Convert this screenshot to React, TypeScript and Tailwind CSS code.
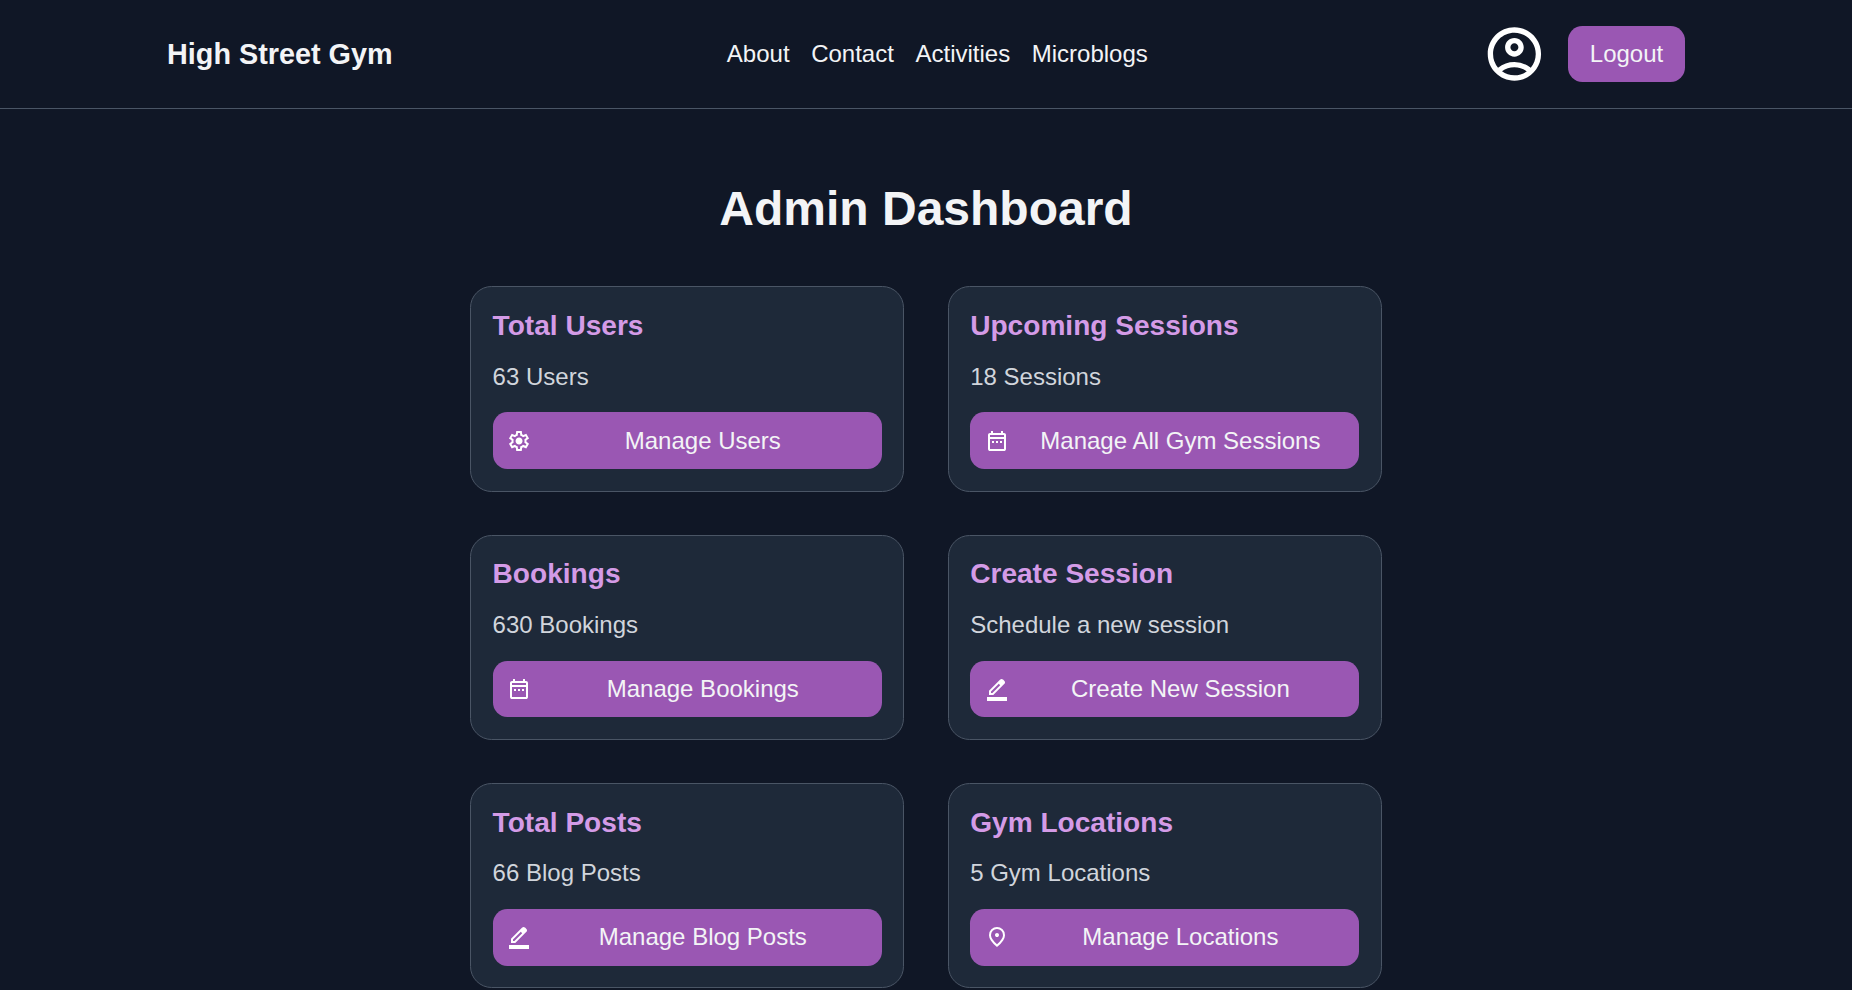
import React from "react";
import { MdOutlineAccountCircle } from "react-icons/md";

const icons = {
  settings:
    "m9.25 22l-.4-3.2q-.325-.125-.612-.3t-.563-.375L4.7 19.375l-2.75-4.75l2.575-1.95Q4.5 12.5 4.5 12.338v-.675q0-.163.025-.338L1.95 9.375l2.75-4.75l2.975 1.25q.275-.2.575-.375t.6-.3l.4-3.2h5.5l.4 3.2q.325.125.613.3t.562.375l2.975-1.25l2.75 4.75l-2.575 1.95q.025.175.025.338v.674q0 .163-.05.338l2.575 1.95l-2.75 4.75l-2.95-1.25q-.275.2-.575.375t-.6.3l-.4 3.2zM11 20h1.975l.35-2.65q.775-.2 1.438-.587t1.212-.938l2.475 1.025l.975-1.7l-2.15-1.625q.125-.35.175-.737T17.5 12t-.05-.787t-.175-.738l2.15-1.625l-.975-1.7l-2.475 1.05q-.55-.575-1.212-.962t-1.438-.588L13 4h-1.975l-.35 2.65q-.775.2-1.437.588t-1.213.937L5.55 7.15l-.975 1.7l2.15 1.6q-.125.375-.175.75t-.05.8q0 .4.05.775t.175.75l-2.15 1.625l.975 1.7l2.475-1.05q.55.575 1.213.963t1.437.587zm1.05-4.5q1.45 0 2.475-1.025T15.55 12t-1.025-2.475T12.05 8.5q-1.475 0-2.488 1.025T8.55 12t1.013 2.475T12.05 15.5",
  calendar:
    "M5 22q-.825 0-1.412-.587T3 20V6q0-.825.588-1.412T5 4h1V2h2v2h8V2h2v2h1q.825 0 1.413.588T21 6v14q0 .825-.587 1.413T19 22zm0-2h14V10H5zM5 8h14V6H5zM7 12h2v2H7zm4 0h2v2h-2zm4 0h2v2h-2z",
  pencil:
    "M2 24v-4h20v4zM4 18v-4.25L15.2 2.575q.275-.275.638-.425t.762-.15t.775.15t.675.45L19.425 4q.3.275.438.65T20 5.4q0 .4-.137.763t-.438.662L8.25 18zm2-2h1.4l7.8-7.8-1.4-1.4L6 14.6z",
  pin: "M12 12q.825 0 1.413-.587T14 10t-.587-1.412T12 8t-1.412.588T10 10t.588 1.413T12 12m0 7.35q3.05-2.8 4.525-5.087T18 10.2q0-2.725-1.737-4.462T12 4T7.738 5.738T6 10.2q0 1.775 1.475 4.063T12 19.35M12 22q-4.025-3.425-6.012-6.362T4 10.2q0-3.75 2.413-5.975T12 2t5.588 2.225T20 10.2q0 2.5-1.987 5.438T12 22",
};

type IconName = keyof typeof icons;

interface CardProps {
  title: string;
  detail: string;
  action: string;
  icon: IconName;
}

const cards: CardProps[] = [
  { title: "Total Users", detail: "63 Users", action: "Manage Users", icon: "settings" },
  { title: "Upcoming Sessions", detail: "18 Sessions", action: "Manage All Gym Sessions", icon: "calendar" },
  { title: "Bookings", detail: "630 Bookings", action: "Manage Bookings", icon: "calendar" },
  { title: "Create Session", detail: "Schedule a new session", action: "Create New Session", icon: "pencil" },
  { title: "Total Posts", detail: "66 Blog Posts", action: "Manage Blog Posts", icon: "pencil" },
  { title: "Gym Locations", detail: "5 Gym Locations", action: "Manage Locations", icon: "pin" },
];

const links = ["About", "Contact", "Activities", "Microblogs"];

function Icon({ name }: { name: IconName }) {
  return (
    <svg viewBox="0 0 24 24" fill="white" className="size-6 shrink-0">
      <path d={icons[name]} />
    </svg>
  );
}

function Card({ title, detail, action, icon }: CardProps) {
  return (
    <section className="flex h-[205.15px] flex-col rounded-[21.6px] border border-[#4a5565] bg-[#1e2939] p-[21.6px]">
      <h2 className="text-[28.08px] leading-[33.6px] font-bold text-[#d49be7]">{title}</h2>
      <p className="mt-[16.2px] leading-[36px] text-[#d1d5dc]">{detail}</p>
      <button className="mt-auto flex h-[56.6px] w-full items-center gap-[7.2px] rounded-[14.4px] bg-[#9a57b3] px-[14.4px]">
        <Icon name={icon} />
        <span className="flex-1 text-center">{action}</span>
      </button>
    </section>
  );
}

export default function App() {
  return (
    <div className="h-screen overflow-hidden bg-[#101726] font-['Liberation_Sans',Arial,sans-serif] text-[24px] text-[#f3f4f6]">
      <header className="h-[109px] border-b border-[#4a5565]">
        <div className="mx-auto flex h-full w-[1518px] items-center justify-between">
          <div className="pt-[2px] text-[28.8px] font-bold">High Street Gym</div>
          <nav className="flex gap-[21.6px]">
            {links.map((link) => (
              <a key={link} href="#">
                {link}
              </a>
            ))}
          </nav>
          <div className="flex items-center gap-[22px]">
            <MdOutlineAccountCircle viewBox="-0.15 0 24 24" className="size-16 text-white" />
            <button className="h-14 rounded-[14.4px] bg-[#9a57b3] px-[21.8px]">Logout</button>
          </div>
        </div>
      </header>
      <main className="mx-auto flex w-[912px] flex-col pt-[64px]">
        <h1 className="text-center text-[48px] leading-[72px] font-bold">Admin Dashboard</h1>
        <div className="mt-[41.4px] grid grid-cols-2 gap-[43.2px]">
          {cards.map((card) => (
            <Card key={card.title} {...card} />
          ))}
        </div>
      </main>
    </div>
  );
}
